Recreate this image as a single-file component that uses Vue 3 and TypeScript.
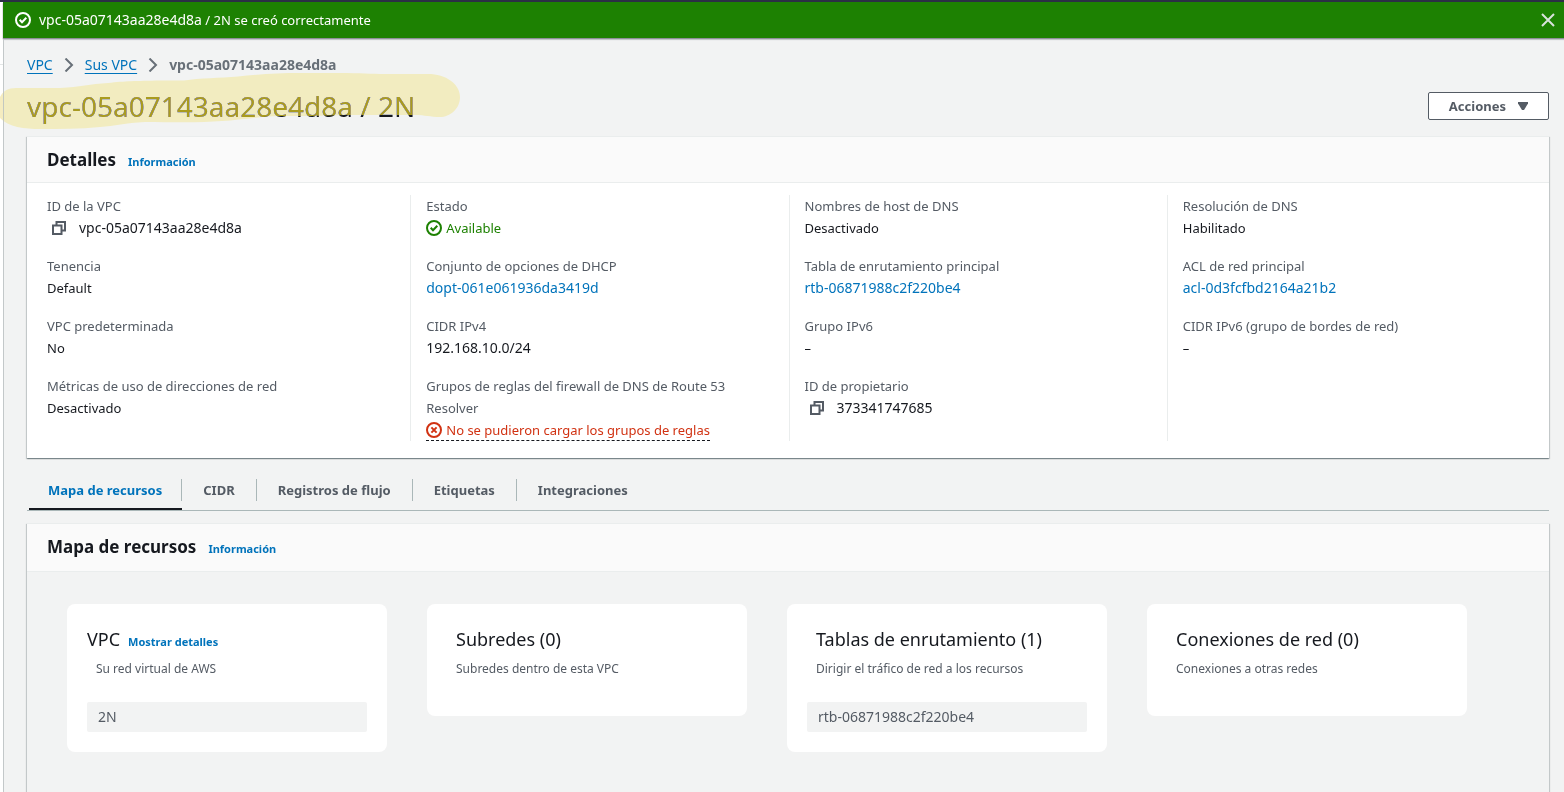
<script setup lang="ts">
interface Field {
  label: string
  value: string
  kind?: 'copy' | 'link' | 'code' | 'ok' | 'error'
}

interface ResourceCard {
  title: string
  subtitle: string
  items: string[]
  action?: string
}

const vpcId = 'vpc-05a07143aa28e4d8a'

const columns: Field[][] = [
  [
    { label: 'ID de la VPC', value: vpcId, kind: 'copy' },
    { label: 'Tenencia', value: 'Default' },
    { label: 'VPC predeterminada', value: 'No' },
    { label: 'Métricas de uso de direcciones de red', value: 'Desactivado' },
  ],
  [
    { label: 'Estado', value: 'Available', kind: 'ok' },
    { label: 'Conjunto de opciones de DHCP', value: 'dopt-061e061936da3419d', kind: 'link' },
    { label: 'CIDR IPv4', value: '192.168.10.0/24', kind: 'code' },
    {
      label: 'Grupos de reglas del firewall de DNS de Route 53 Resolver',
      value: 'No se pudieron cargar los grupos de reglas',
      kind: 'error',
    },
  ],
  [
    { label: 'Nombres de host de DNS', value: 'Desactivado' },
    { label: 'Tabla de enrutamiento principal', value: 'rtb-06871988c2f220be4', kind: 'link' },
    { label: 'Grupo IPv6', value: '–' },
    { label: 'ID de propietario', value: '373341747685', kind: 'copy' },
  ],
  [
    { label: 'Resolución de DNS', value: 'Habilitado' },
    { label: 'ACL de red principal', value: 'acl-0d3fcfbd2164a21b2', kind: 'link' },
    { label: 'CIDR IPv6 (grupo de bordes de red)', value: '–' },
  ],
]

const tabs = ['Mapa de recursos', 'CIDR', 'Registros de flujo', 'Etiquetas', 'Integraciones']
const activeTab = 'Mapa de recursos'

const cards: ResourceCard[] = [
  { title: 'VPC', subtitle: 'Su red virtual de AWS', items: ['2N'], action: 'Mostrar detalles' },
  { title: 'Subredes (0)', subtitle: 'Subredes dentro de esta VPC', items: [] },
  {
    title: 'Tablas de enrutamiento (1)',
    subtitle: 'Dirigir el tráfico de red a los recursos',
    items: ['rtb-06871988c2f220be4'],
  },
  { title: 'Conexiones de red (0)', subtitle: 'Conexiones a otras redes', items: [] },
]

const markerPath =
  'M0 24C3 18 8 15 16 15H60C80 14 90 11 108 10C125 8 135 8 160 7.500H184C200 5 220 5 238 3.500C260 1 280 0 300 0H340C360 0 372 1 385 1H428C446 1 460 11 460 24C460 36 450 44 440 44C430 44 425 42 415 42H345C320 43 300 43 280 43C255 44 240 47 222 48C200 50 170 49 145 49C125 50 115 53 100 54C80 56 60 56 40 56C25 56 8 54 0 45Z'
</script>

<template>
  <div class="shell">
    <div class="page">
      <div class="flash" role="status">
        <svg class="icon" viewBox="0 0 16 16" aria-hidden="true">
          <circle cx="8" cy="8" r="7" />
          <path d="M4.700 7.800 7 10.200 11.300 5.800" />
        </svg>
        <span><span class="code">{{ vpcId }}</span> / 2N se creó correctamente</span>
        <button class="close" type="button" aria-label="Cerrar">
          <svg viewBox="0 0 14 14" aria-hidden="true"><path d="M1 1 13 13M13 1 1 13" /></svg>
        </button>
      </div>

      <main class="content">
        <nav class="crumbs" aria-label="Ruta">
          <a href="#vpc">VPC</a>
          <svg viewBox="0 0 10 14" aria-hidden="true"><path d="M1.500 0.500 8 7 1.500 13.500" /></svg>
          <a href="#vpcs">Sus VPC</a>
          <svg viewBox="0 0 10 14" aria-hidden="true"><path d="M1.500 0.500 8 7 1.500 13.500" /></svg>
          <span class="current">{{ vpcId }}</span>
        </nav>

        <div class="title-row">
          <h1>{{ vpcId }} / 2N</h1>
          <button class="actions" type="button">
            Acciones
            <svg viewBox="0 0 10 8" aria-hidden="true"><path d="M0 0H10V1.500L6 8H4L0 1.500Z" /></svg>
          </button>
          <svg class="marker tint" viewBox="0 0 460 56" aria-hidden="true"><path :d="markerPath" /></svg>
          <svg class="marker wash" viewBox="0 0 460 56" aria-hidden="true"><path :d="markerPath" /></svg>
        </div>

        <section class="panel details">
          <header class="panel-head">
            <h2>Detalles</h2>
            <a class="info" href="#info-detalles">Información</a>
          </header>
          <div class="columns">
            <dl v-for="(column, c) in columns" :key="c">
              <div v-for="field in column" :key="field.label">
                <dt>{{ field.label }}</dt>
                <dd>
                  <a v-if="field.kind === 'link'" class="code" :href="'#' + field.value">{{ field.value }}</a>
                  <template v-else-if="field.kind === 'copy'">
                    <button class="copy" type="button" :aria-label="'Copiar ' + field.label">
                      <svg viewBox="0 0 14 14" aria-hidden="true">
                        <path d="M1 4.500H9.500V13H1ZM4.500 4.500V1H13V9.500H9.500" />
                      </svg>
                    </button>
                    <span class="code">{{ field.value }}</span>
                  </template>
                  <span v-else-if="field.kind === 'code'" class="code">{{ field.value }}</span>
                  <span v-else-if="field.kind" class="status" :class="field.kind">
                    <svg class="icon" viewBox="0 0 16 16" aria-hidden="true">
                      <circle cx="8" cy="8" r="7" />
                      <path v-if="field.kind === 'ok'" d="M4.700 7.800 7 10.200 11.300 5.800" />
                      <path v-else d="M5.400 5.400 10.600 10.600M10.600 5.400 5.400 10.600" />
                    </svg>
                    {{ field.value }}
                  </span>
                  <span v-else>{{ field.value }}</span>
                </dd>
              </div>
            </dl>
          </div>
        </section>

        <div class="tabs" role="tablist">
          <button
            v-for="tab in tabs"
            :key="tab"
            type="button"
            role="tab"
            :aria-selected="tab === activeTab"
            :class="{ active: tab === activeTab }"
          >
            <span>{{ tab }}</span>
          </button>
        </div>

        <section class="panel map">
          <header class="panel-head">
            <h2>Mapa de recursos</h2>
            <a class="info" href="#info-mapa">Información</a>
          </header>
          <div class="cards">
            <article v-for="card in cards" :key="card.title" class="card">
              <div class="card-head" :class="{ flush: card.action }">
                <h3>{{ card.title }}</h3>
                <a v-if="card.action" class="info" href="#detalles">{{ card.action }}</a>
              </div>
              <p>{{ card.subtitle }}</p>
              <ul v-if="card.items.length">
                <li v-for="item in card.items" :key="item">{{ item }}</li>
              </ul>
            </article>
          </div>
        </section>
      </main>
    </div>
  </div>
</template>

<style>
body {
  margin: 0;
  background: #fff;
}
</style>

<style scoped>
* {
  box-sizing: border-box;
}

.shell {
  min-height: 100vh;
  display: flex;
  padding-left: 3px;
  border-top: 2px solid #2b2f45;
  background: linear-gradient(#e3e6e6, #e3e6e6) 0 62px / 3px 1px no-repeat #fff;
  font: 13px/22px "Noto Sans", "Open Sans", sans-serif;
  color: #16191f;
}

.page {
  flex: 1;
  min-width: 0;
  display: flex;
  flex-direction: column;
  background: #f2f3f3;
  box-shadow: inset 1px 0 #c3c8c9;
}

a {
  color: #0073bb;
  text-decoration: none;
}

button {
  font: inherit;
  color: inherit;
  border: 0;
  padding: 0;
  background: none;
  cursor: pointer;
}

h1,
h2,
h3,
p,
dl,
dd,
ul {
  margin: 0;
  padding: 0;
}

svg {
  display: block;
  fill: none;
  stroke: currentColor;
  stroke-width: 2;
  flex: none;
}

.icon {
  width: 16px;
  height: 16px;
}

.code {
  font-size: 14px;
}

.flash {
  display: flex;
  align-items: center;
  gap: 8px;
  height: 36px;
  padding: 0 9px 0 12px;
  background: #1d8102;
  color: #fff;
  box-shadow: 0 1px 1px #8e9099, 0 2px 1px #cdd0d3;
}

.close {
  margin-left: auto;
  color: #d9e2dc;
}

.close svg {
  width: 14px;
  height: 14px;
}

.content {
  flex: 1;
  display: flex;
  flex-direction: column;
  padding: 16px 15px 0 24px;
}

.crumbs {
  display: flex;
  align-items: center;
  gap: 11px;
  height: 22px;
  font-size: 14px;
}

.crumbs a {
  text-decoration: underline 1px;
  text-underline-offset: 3px;
}

.crumbs svg {
  width: 10px;
  height: 14px;
  color: #687078;
}

.crumbs .current {
  color: #687078;
  font-weight: 700;
}

.title-row {
  position: relative;
  display: flex;
  align-items: center;
  justify-content: space-between;
  height: 60px;
}

h1 {
  font-size: 28px;
  line-height: 36px;
  font-weight: 400;
}

.marker {
  position: absolute;
  left: -27px;
  top: -3px;
  width: 460px;
  height: 56px;
  stroke: none;
  pointer-events: none;
}

.tint {
  fill: #a99b1c;
  mix-blend-mode: lighten;
}

.wash {
  fill: #f5ecc0;
  mix-blend-mode: darken;
}

.actions {
  display: flex;
  align-items: center;
  gap: 12px;
  height: 28px;
  padding: 0 20px;
  border: 1px solid #545b64;
  border-radius: 2px;
  background: #fff;
  color: #545b64;
  font-weight: 700;
}

.actions svg {
  width: 10px;
  height: 8px;
  fill: currentColor;
  stroke: none;
}

.panel {
  border-top: 1px solid #eaeded;
  background: #fff;
  box-shadow:
    0 1px 1px rgba(0, 28, 36, 0.3),
    1px 1px 1px rgba(0, 28, 36, 0.15),
    -1px 1px 1px rgba(0, 28, 36, 0.15);
}

.panel-head {
  display: flex;
  align-items: baseline;
  gap: 12px;
  padding: 12px 20px 11px;
  border-bottom: 1px solid #eaeded;
  background: #fafafa;
}

h2 {
  font-size: 17px;
  line-height: 22px;
  font-weight: 700;
}

.info {
  font-size: 11px;
  line-height: 16px;
  font-weight: 700;
}

.columns {
  display: grid;
  grid-template-columns: repeat(4, minmax(0, 1fr));
  padding: 12px 4px 17px 5px;
}

dl {
  display: flex;
  flex-direction: column;
  gap: 16px;
  padding: 0 15px;
}

dl + dl {
  border-left: 1px solid #eaeded;
}

dt {
  color: #545b64;
}

dd {
  display: flex;
}

.copy {
  display: flex;
  align-items: center;
  padding: 0 13px 0 5px;
  color: #545b64;
}

.copy svg {
  width: 14px;
  height: 14px;
}

.status {
  display: flex;
  align-items: center;
  gap: 4px;
  height: 22px;
}

.ok {
  color: #1d8102;
}

.error {
  color: #d13212;
  border-bottom: 1px dashed #16191f;
}

.tabs {
  display: flex;
  height: 53px;
  padding: 17px 0 0 2px;
  border-bottom: 1px solid #aab7b8;
}

.tabs button {
  display: flex;
  align-items: flex-start;
  padding-top: 4px;
  color: #545b64;
  font-weight: 700;
}

.tabs span {
  padding: 0 21px;
  border-right: 1px solid #aab7b8;
}

.tabs button:first-child span {
  padding: 0 19px;
}

.tabs button:last-child span {
  border-right: 0;
}

.tabs .active {
  color: #0073bb;
  border-bottom: 2px solid #16191f;
}

.map {
  flex: 1;
  margin-top: 12px;
  background: #f2f3f3;
}

.map .panel-head {
  padding: 12px 20px 13px;
}

.cards {
  display: grid;
  grid-template-columns: repeat(4, minmax(0, 320px));
  align-items: start;
  gap: 40px;
  padding: 32px 40px 40px;
}

.card {
  padding: 24px 20px 20px;
  border-radius: 8px;
  background: #fff;
}

.card-head {
  display: flex;
  align-items: baseline;
  gap: 8px;
  padding-left: 9px;
}

.card-head.flush {
  padding-left: 0;
}

h3 {
  font-size: 18px;
  line-height: 22px;
  font-weight: 400;
}

.card p {
  padding: 8px 0 16px 9px;
  font-size: 12px;
  color: #545b64;
}

ul {
  margin-top: 6px;
  list-style: none;
}

li {
  height: 30px;
  padding: 4px 11px;
  border-radius: 2px;
  background: #f2f3f3;
  color: #545b64;
  font-size: 14px;
}
</style>
